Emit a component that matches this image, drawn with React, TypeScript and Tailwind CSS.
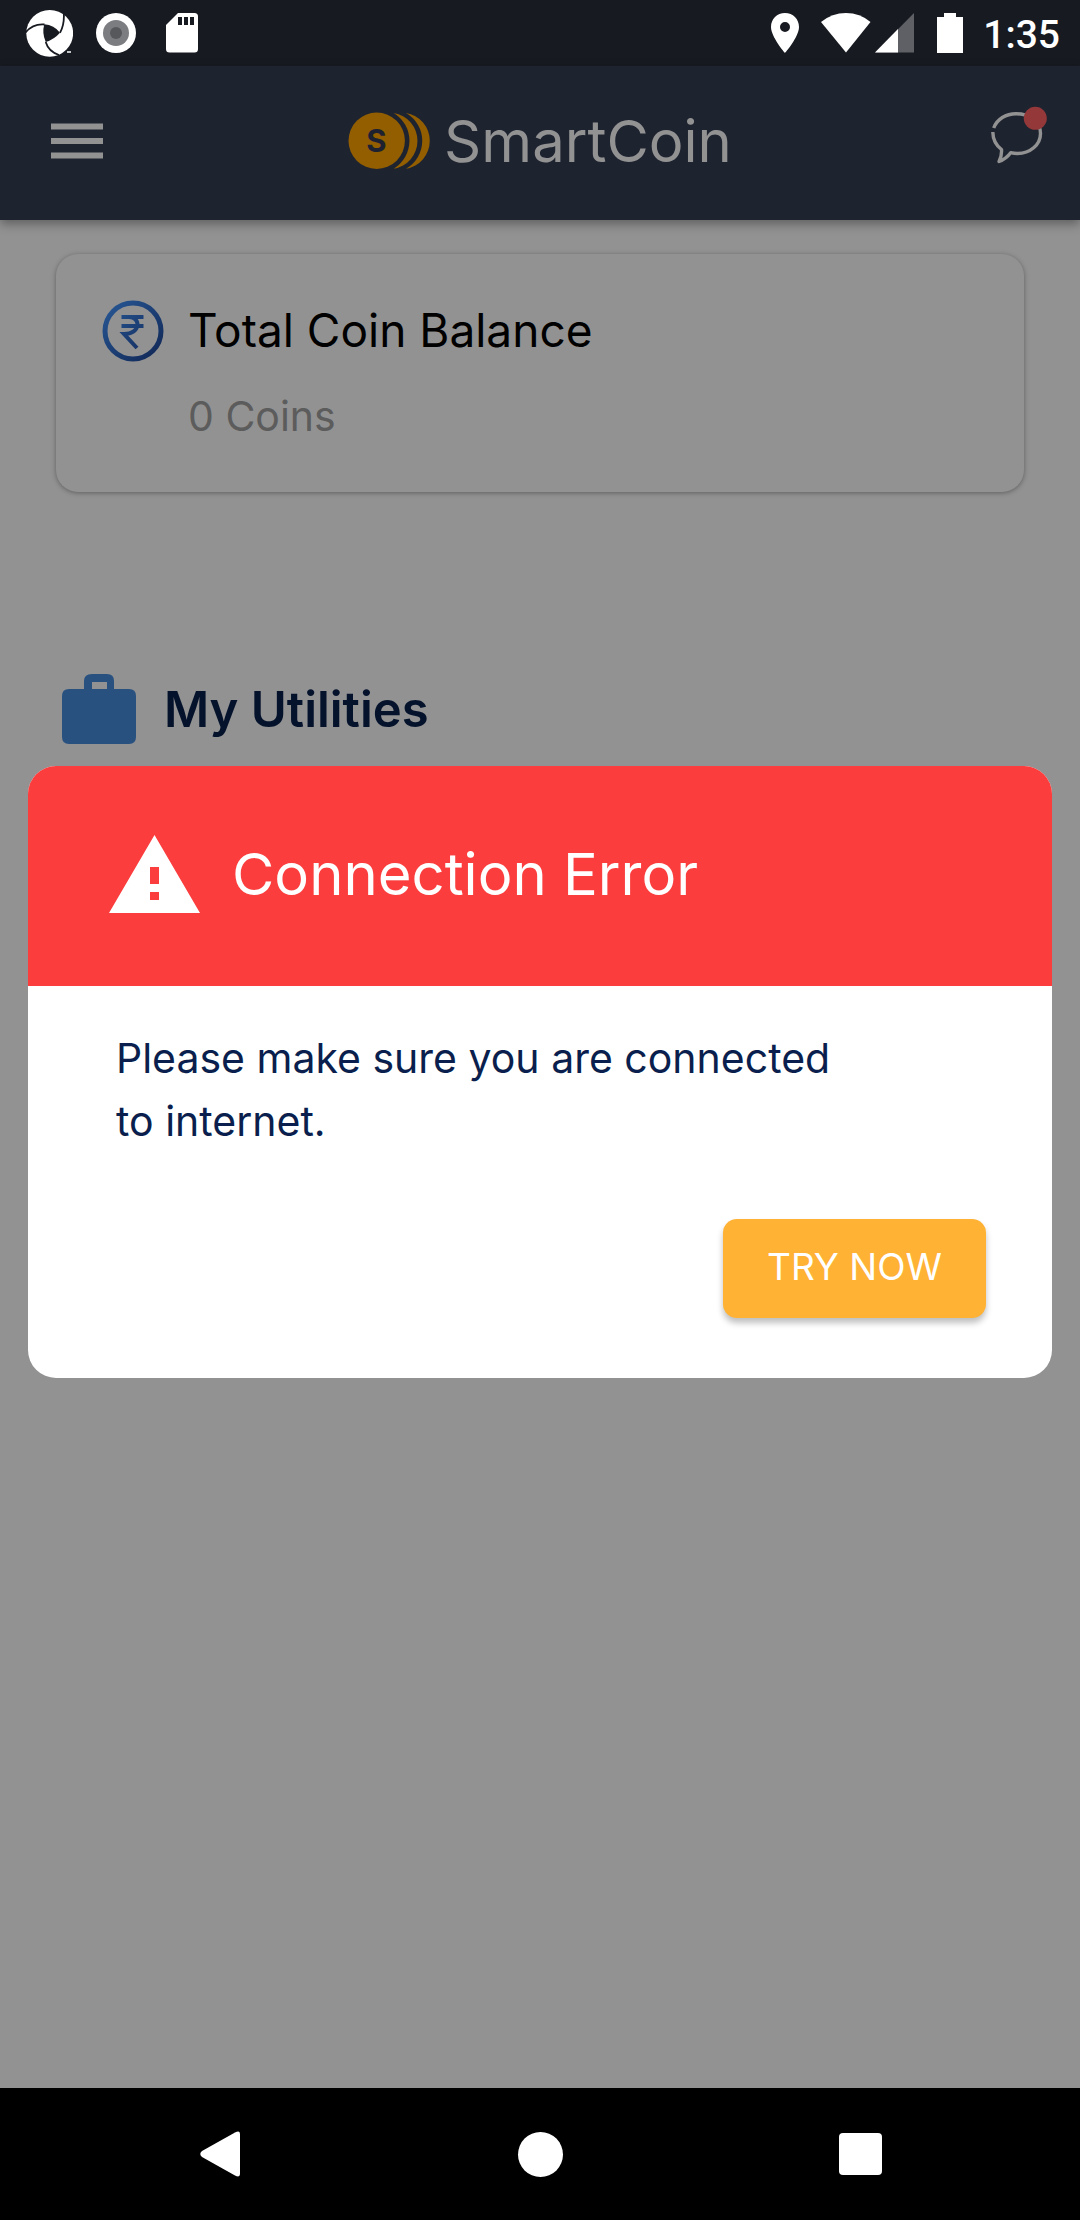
import React from "react";

function StatusBar() {
  return (
    <div className="flex h-[66px] shrink-0 items-center justify-between bg-[#171a21] pr-5 pl-[25px]">
      <div className="flex items-center">
        <svg className="size-12" viewBox="0 0 48 48" aria-hidden="true">
          <circle cx="24.7" cy="24.3" r="23.4" fill="#fff" />
          <path d="M19.3 15.3Q29 16 35 23.7Q29 30.5 20.7 33Q16.800 24 19.300 15.300Z" fill="#171a21" />
          <path d="M0.500 23.500Q8 14.500 19.500 15.500M38.600 2Q40 15 35 23.700M34 46Q23.500 42.500 20.700 33" fill="none" stroke="#171a21" strokeWidth="1.800" />
          <path d="M42 43h4" stroke="#fff" strokeWidth="1.500" />
        </svg>
        <svg className="ml-[23px] size-10" viewBox="0 0 40 40" aria-hidden="true">
          <circle cx="20" cy="20" r="20" fill="#fff" />
          <circle cx="20" cy="20" r="13" fill="#7c7d81" />
          <circle cx="20" cy="20" r="6" fill="#57585c" />
        </svg>
        <svg className="ml-[30px] h-10 w-8" viewBox="0 0 32 40" aria-hidden="true">
          <path d="M12 0H28.500Q32 0 32 3.500V36Q32 39.500 28.500 39.500H3.500Q0 39.500 0 36V12Z" fill="#fff" />
          <path d="M12 4h4v8h-4zM18 4h4v8h-4zM24 4h4v8h-4z" fill="#171a21" />
        </svg>
      </div>
      <div className="flex items-center text-white">
        <svg className="h-10 w-7" viewBox="0 0 28 40" aria-hidden="true">
          <path fillRule="evenodd" d="M14 0C6 0 0 6 0 14C0 24 14 40 14 40S28 24 28 14C28 6 22 0 14 0ZM14 9a5 5 0 1 1 0 10a5 5 0 1 1 0-10Z" fill="#fff" />
        </svg>
        <svg className="ml-[22px] h-10 w-[50px]" viewBox="0 0 50 40" aria-hidden="true">
          <path d="M0 9Q11 0 25 0T49.500 9L25 39.500Z" fill="#fff" />
        </svg>
        <svg className="ml-1 h-10 w-10" viewBox="0 0 40 40" aria-hidden="true">
          <path d="M39 0V39.500H0Z" fill="#5f6065" />
          <path d="M23 16V39.500H0Z" fill="#fff" />
        </svg>
        <svg className="ml-[22px] h-10 w-[26px]" viewBox="0 0 26 40" aria-hidden="true">
          <path d="M7 0H19V4H26V40H0V4H7Z" fill="#fff" />
        </svg>
        <span className="ml-5 pt-[3px] font-[Roboto,sans-serif] text-[39px] leading-[48px] font-medium">1:35</span>
      </div>
    </div>
  );
}

function CoinLogo() {
  return (
    <svg className="h-[58px] w-[84px]" viewBox="0 0 84 58" aria-hidden="true">
      <circle cx="28.700" cy="28.700" r="28.200" fill="#925e00" />
      <path d="M45.700 1A28.200 28.200 0 0 1 45.700 56.700A32.500 32.500 0 0 0 45.700 1Z" fill="#925e00" />
      <path d="M58 1A28.200 28.200 0 0 1 58 56.700A32 32 0 0 0 58 1Z" fill="#925e00" />
      <text x="28.500" y="40" textAnchor="middle" fontSize="31" fontWeight="700" fontFamily="Inter, sans-serif" fill="#1e2230">S</text>
    </svg>
  );
}

function Header() {
  return (
    <header className="grid h-[154px] shrink-0 grid-cols-[1fr_auto_1fr] items-center bg-[#1e2330] px-[30px] pb-1 shadow-[0_4px_10px_rgba(0,0,0,0.35)]">
      <button type="button" aria-label="Open menu" className="ml-[21px] justify-self-start">
        <svg className="h-9 w-[52px]" viewBox="0 0 52 36" aria-hidden="true">
          <path d="M0 3.500H52M0 18H52M0 32.500H52" stroke="#929292" strokeWidth="6" />
        </svg>
      </button>
      <div className="flex items-center gap-3">
        <CoinLogo />
        <span className="text-[58px] leading-[64px] text-[#929292]">SmartCoin</span>
      </div>
      <button type="button" aria-label="Messages" className="mb-3 justify-self-end">
        <svg className="size-[62px]" viewBox="0 0 62 62" aria-hidden="true">
          <path
            d="M5.700 24C9 15 18 9.700 28 9.700C42 9.700 52.500 18 52.500 29.500C52.500 41 42 49.500 29.500 49.500Q26 49.500 22.700 48.700Q18 55 11 57.500Q14 52 13.500 45.500Q5 39 4.800 28"
            fill="none"
            stroke="#929292"
            strokeWidth="3.400"
            strokeLinejoin="round"
          />
          <circle cx="47.300" cy="14.300" r="11.500" fill="#943839" />
        </svg>
      </button>
    </header>
  );
}

function RupeeIcon() {
  return (
    <svg className="size-[62px] shrink-0" viewBox="4 4 62 62" aria-hidden="true">
      <defs>
        <linearGradient id="rupee" gradientUnits="userSpaceOnUse" x1="12" y1="12" x2="56" y2="58">
          <stop offset="0" stopColor="#25538f" />
          <stop offset="1" stopColor="#132c5c" />
        </linearGradient>
      </defs>
      <g fill="none" stroke="url(#rupee)">
        <circle cx="35" cy="35" r="28" strokeWidth="5" />
        <path d="M23.500 21.010L45.500 21M23.500 30.010L45.500 30M31 21C43 21 43 38 26 38L39 52" strokeWidth="4" />
      </g>
    </svg>
  );
}

function BalanceCard() {
  return (
    <section className="mx-14 mt-[34px] flex h-[238px] gap-6 rounded-[22px] bg-[#929292] pt-[46px] pl-[46px] shadow-[0_1px_5px_rgba(0,0,0,0.35)]">
      <RupeeIcon />
      <div>
        <h2 className="text-[46px] leading-[60px] text-black">Total Coin Balance</h2>
        <p className="mt-7 text-[41px] leading-[56px] text-[#5c5c5c]">0 Coins</p>
      </div>
    </section>
  );
}

function UtilitiesHeading() {
  return (
    <section className="mx-[62px] mt-[180px] flex items-center gap-7">
      <svg className="h-[72px] w-[74px]" viewBox="0 0 74 72" aria-hidden="true">
        <path
          fillRule="evenodd"
          d="M30 2H45Q52 2 52 9V17H67Q74 17 74 24V65Q74 72 67 72H7Q0 72 0 65V24Q0 17 7 17H22V9Q22 2 30 2ZM30 10V17H45V10Z"
          fill="#285180"
        />
      </svg>
      <h2 className="pt-[3px] text-[49px] leading-[69px] font-semibold text-[#04122b]">My Utilities</h2>
    </section>
  );
}

function ErrorDialog() {
  return (
    <div className="absolute inset-x-0 top-14 bottom-[132px] flex items-center px-7">
      <div role="alertdialog" aria-labelledby="error-title" aria-describedby="error-text" className="w-full overflow-hidden rounded-[28px] bg-white">
        <div className="flex h-[220px] items-center gap-8 bg-[#fb3d3e] pb-1 pl-[81px]">
          <svg className="h-[78px] w-[91px]" viewBox="0 0 91 78" aria-hidden="true">
            <path fillRule="evenodd" d="M45.500 0L91 78H0ZM41 32V49H50V32ZM41 57V65H50V57Z" fill="#fff" />
          </svg>
          <h1 id="error-title" className="text-[58px] leading-[72px] text-white">Connection Error</h1>
        </div>
        <p id="error-text" className="max-w-[840px] pt-[41px] pl-[88px] text-[41px] leading-[63px] text-[#0a1f4d]">
          Please make sure you are connected to internet.
        </p>
        <div className="flex justify-end pt-[66px] pr-[66px] pb-[60px]">
          <button type="button" className="h-[99px] w-[263px] rounded-[14px] bg-[#ffb233] pb-1 text-[37px] leading-[48px] text-white shadow-[0_5px_6px_rgba(0,0,0,0.25)]">
            TRY NOW
          </button>
        </div>
      </div>
    </div>
  );
}

function NavBar() {
  return (
    <nav className="grid h-[132px] shrink-0 grid-cols-[1fr_200px_1fr] items-center bg-black">
      <button type="button" aria-label="Back" className="flex justify-center">
        <svg className="h-[46px] w-10" viewBox="0 0 40 46" aria-hidden="true">
          <path d="M35 1.500Q40 -1 40 3V43Q40 47 35 44.500L2 26Q-1.500 23 2 20Z" fill="#fff" />
        </svg>
      </button>
      <button type="button" aria-label="Home" className="flex justify-center">
        <span className="size-[45px] rounded-full bg-white" />
      </button>
      <button type="button" aria-label="Recent apps" className="flex justify-center">
        <span className="h-[42px] w-[43px] rounded bg-white" />
      </button>
    </nav>
  );
}

export default function App() {
  return (
    <div className="relative flex min-h-screen flex-col bg-[#929292] font-[Inter,sans-serif]">
      <StatusBar />
      <Header />
      <main className="grow">
        <BalanceCard />
        <UtilitiesHeading />
      </main>
      <ErrorDialog />
      <NavBar />
    </div>
  );
}
